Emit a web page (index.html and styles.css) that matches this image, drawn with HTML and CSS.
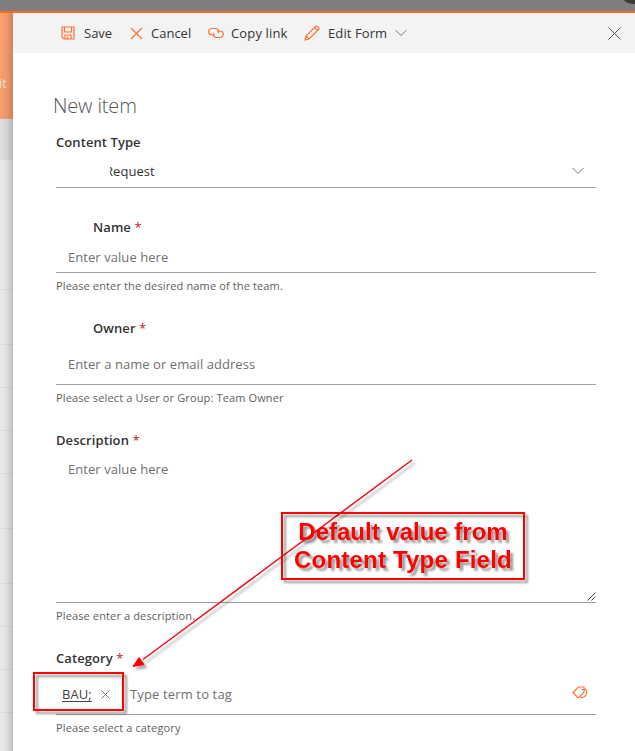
FILE: index.html
```html
<!DOCTYPE html>
<html lang="en">
<head>
<meta charset="utf-8">
<title>New item</title>
<link rel="stylesheet" href="styles.css">
</head>
<body>
<div class="app">
  <header class="suite-bar"><span class="avatar"></span></header>
  <div class="content">
    <aside class="page">
      <div class="hero"><span class="hero-text">it</span></div>
      <div class="band"></div>
      <div class="rows">
        <i class="row r1"></i><i class="row r2"></i><i class="row r3"></i><i class="row r3"></i><i class="row r3"></i><i class="row r2"></i><i class="row r2"></i><i class="row r3"></i><i class="row r3"></i><i class="row r3"></i>
      </div>
    </aside>
    <main class="panel">
      <nav class="toolbar">
        <button class="cmd save"><svg width="14" height="14" viewBox="0 0 14 14"><path d="M1 1h12v12H3L1 11zM3.500 1v5h7V1M4 13V9h6v4M6.500 10.500v2.500"/></svg><span>Save</span></button>
        <button class="cmd cancel"><svg width="13" height="13" viewBox="0 0 13 13"><path d="M1 1l11 11M12 1L1 12"/></svg><span>Cancel</span></button>
        <button class="cmd copy"><svg width="16" height="12" viewBox="0 0 16 12"><path d="M6.500 8H4a3.200 3.200 0 0 1 0-6.500h3.500a3.200 3.200 0 0 1 2.800 4.800M9 4h3a3.200 3.200 0 0 1 0 6.500H8.500A3.200 3.200 0 0 1 5.700 5.700"/></svg><span>Copy link</span></button>
        <button class="cmd edit"><svg width="16" height="16" viewBox="0 0 16 16"><path d="M1 15l1-4L11.500 1.500a1.500 1.500 0 0 1 2 0l1 1a1.500 1.500 0 0 1 0 2L5 14zM2 11l3 3M10.500 2.500l3 3"/></svg><span>Edit Form</span><svg class="grey" width="12" height="8" viewBox="0 0 12 8"><path d="M.5 1L6 6.500 11.500 1"/></svg></button>
        <button class="cmd close"><svg class="dark" width="13" height="13" viewBox="0 0 13 13"><path d="M.5.5l12 12M12.500.5l-12 12"/></svg></button>
      </nav>
      <form class="form">
        <h1>New item</h1>
        <section class="field first">
          <div class="label">Content Type</div>
          <div class="control select"><span class="clip"><span>Request</span></span><svg class="grey" width="12" height="8" viewBox="0 0 12 8"><path d="M.5 1L6 6.500 11.500 1"/></svg></div>
        </section>
        <section class="field name">
          <div class="label indent">Name <b>*</b></div>
          <div class="control">Enter value here</div>
          <p>Please enter the desired name of the team.</p>
        </section>
        <section class="field">
          <div class="label indent">Owner <b>*</b></div>
          <div class="control tall">Enter a name or email address</div>
          <p>Please select a User or Group: Team Owner</p>
        </section>
        <section class="field long">
          <div class="label">Description <b>*</b></div>
          <div class="control area">Enter value here<svg class="grip" width="9" height="9" viewBox="0 0 9 9"><path d="M.5 8.500l8-8M4.500 8.500l4-4"/></svg></div>
          <p>Please enter a description.</p>
        </section>
        <section class="field">
          <div class="label">Category <b>*</b></div>
          <div class="control tall tags"><span class="term">BAU;</span><svg class="grey" width="9" height="9" viewBox="0 0 9 9"><path d="M.5.500l8 8M8.500.500l-8 8"/></svg><span class="tag-hint">Type term to tag</span><svg class="tag" width="16" height="13" viewBox="0 0 16 13"><path d="M1 6.500L6.500 1H12v5.500L6 12zM9.500 3.500h2M12 2.500c3 1 3.500 4 2 6.500-1 2-3 2.500-6 2.500"/></svg></div>
          <p>Please select a category</p>
        </section>
      </form>
    </main>
  </div>
  <svg class="arrow" width="635" height="751" viewBox="0 0 635 751"><path class="line" d="M412 460L143 659.500"/><path class="head" d="M133 666.500l6-9 5 7z"/></svg>
  <div class="target-box"></div>
  <div class="callout"><span>Default value from</span><span class="second">Content Type Field</span></div>
</div>
</body>
</html>
```
FILE: styles.css
```css
* { box-sizing: border-box; }
body { margin: 0; font: 13px/20px "Open Sans", "Noto Sans", sans-serif; color: #333; }
.app { position: relative; width: 635px; height: 751px; overflow: hidden; background: #fff; display: flex; flex-direction: column; }
.suite-bar { position: relative; flex: none; height: 13px; background: #7f7f7f; border-bottom: 2px solid #fd6b1f; overflow: hidden; }
.avatar { position: absolute; left: 619px; top: -25px; width: 29px; height: 29px; border-radius: 50%; background: #3c3d2e; }
.content { flex: 1; display: flex; min-height: 0; }
.page { position: relative; flex: none; width: 13px; background: #ececec; overflow: hidden; }
.page::after { content: ""; position: absolute; inset: 0; background: linear-gradient(90deg, transparent, rgba(0,0,0,.05) 50%, rgba(0,0,0,.19)); }
.hero { height: 106px; background: linear-gradient(#ffa272, #f69f70); padding-top: 60px; }
.hero-text { display: block; margin-left: -1px; color: #fbe6d8; }
.band { height: 41px; background: #dfdfdf; }
.row { display: block; border-bottom: 1px solid #dfdfdf; }
.r1 { height: 130px; }
.r2 { height: 55px; }
.r3 { height: 43px; }
.panel { flex: 1; min-width: 0; background: #fff; }
.toolbar { display: flex; align-items: center; height: 40px; padding: 0 14px 0 48px; background: #f3f3f3; }
.cmd { display: flex; align-items: center; height: 40px; padding: 0; border: 0; background: none; font: inherit; font-size: 13px; color: #333; white-space: nowrap; }
.save { width: 69px; gap: 9px; }
.cancel { width: 78px; gap: 8px; }
.copy { width: 96px; gap: 7px; letter-spacing: .15px; }
.edit { gap: 8px; letter-spacing: .1px; }
.close { margin-left: auto; }
svg { flex: none; fill: none; stroke: #fb7436; stroke-width: 1.200; }
.grey { stroke: #777; stroke-width: 1; }
.dark { stroke: #555; stroke-width: 1; }
.form { padding: 37px 39px 0 43px; }
h1 { margin: 0 0 10px -3px; height: 32px; font-size: 20px; line-height: 32px; letter-spacing: -.15px; font-weight: 300; color: #555; }
.field { height: 90px; margin-bottom: 22px; }
.first { height: 56px; margin-bottom: 29px; }
.name { height: 79px; }
.long { height: 196px; }
.label { height: 20px; font-weight: 600; letter-spacing: .08px; white-space: nowrap; }
.label b { color: #b9202b; font-weight: 400; }
.indent { padding-left: 37px; }
.control { display: flex; align-items: center; height: 36px; padding: 4px 12px 0; border-bottom: 1px solid #a0a0a0; color: #707070; letter-spacing: .06px; }
.select { padding: 2px 12px 0 54px; justify-content: space-between; color: #333; }
.clip { display: block; width: 60px; overflow: hidden; }
.clip span { display: block; margin-left: -5px; }
.tall { height: 47px; padding-top: 6px; }
.area { position: relative; height: 153px; align-items: flex-start; padding-top: 9px; }
.grip { position: absolute; right: 0; bottom: 1px; stroke: #444; stroke-width: 1; }
.tags { padding: 6px 8px 0 6px; }
.term { width: 39px; color: #444; text-decoration: underline; text-underline-offset: 2px; }
.tag-hint { margin-left: 20px; letter-spacing: .14px; }
.tag { margin-left: auto; margin-top: -4px; }
.field p { margin: 3px 0 0; font-size: 11px; letter-spacing: .13px; color: #606060; white-space: nowrap; }
.arrow { position: absolute; left: 0; top: 0; filter: drop-shadow(3px 3px 1px rgba(0,0,0,.3)); }
.line { stroke: #fa0a14; stroke-width: 1.500; }
.head { fill: #f00; stroke: #f00; stroke-width: 1; }
.target-box { position: absolute; left: 33px; top: 672px; width: 91px; height: 39px; border: 2px solid #f00; filter: drop-shadow(3px 3px 1px rgba(0,0,0,.4)); }
.callout { position: absolute; left: 281px; top: 512px; width: 244px; height: 68px; padding-top: 4px; border: 2px solid #f00; display: flex; flex-direction: column; align-items: center; font: bold 24px/28px "Liberation Sans", sans-serif; color: #f00; white-space: nowrap; filter: drop-shadow(3px 3px 1px rgba(0,0,0,.4)); }
.second { letter-spacing: .2px; }
```
